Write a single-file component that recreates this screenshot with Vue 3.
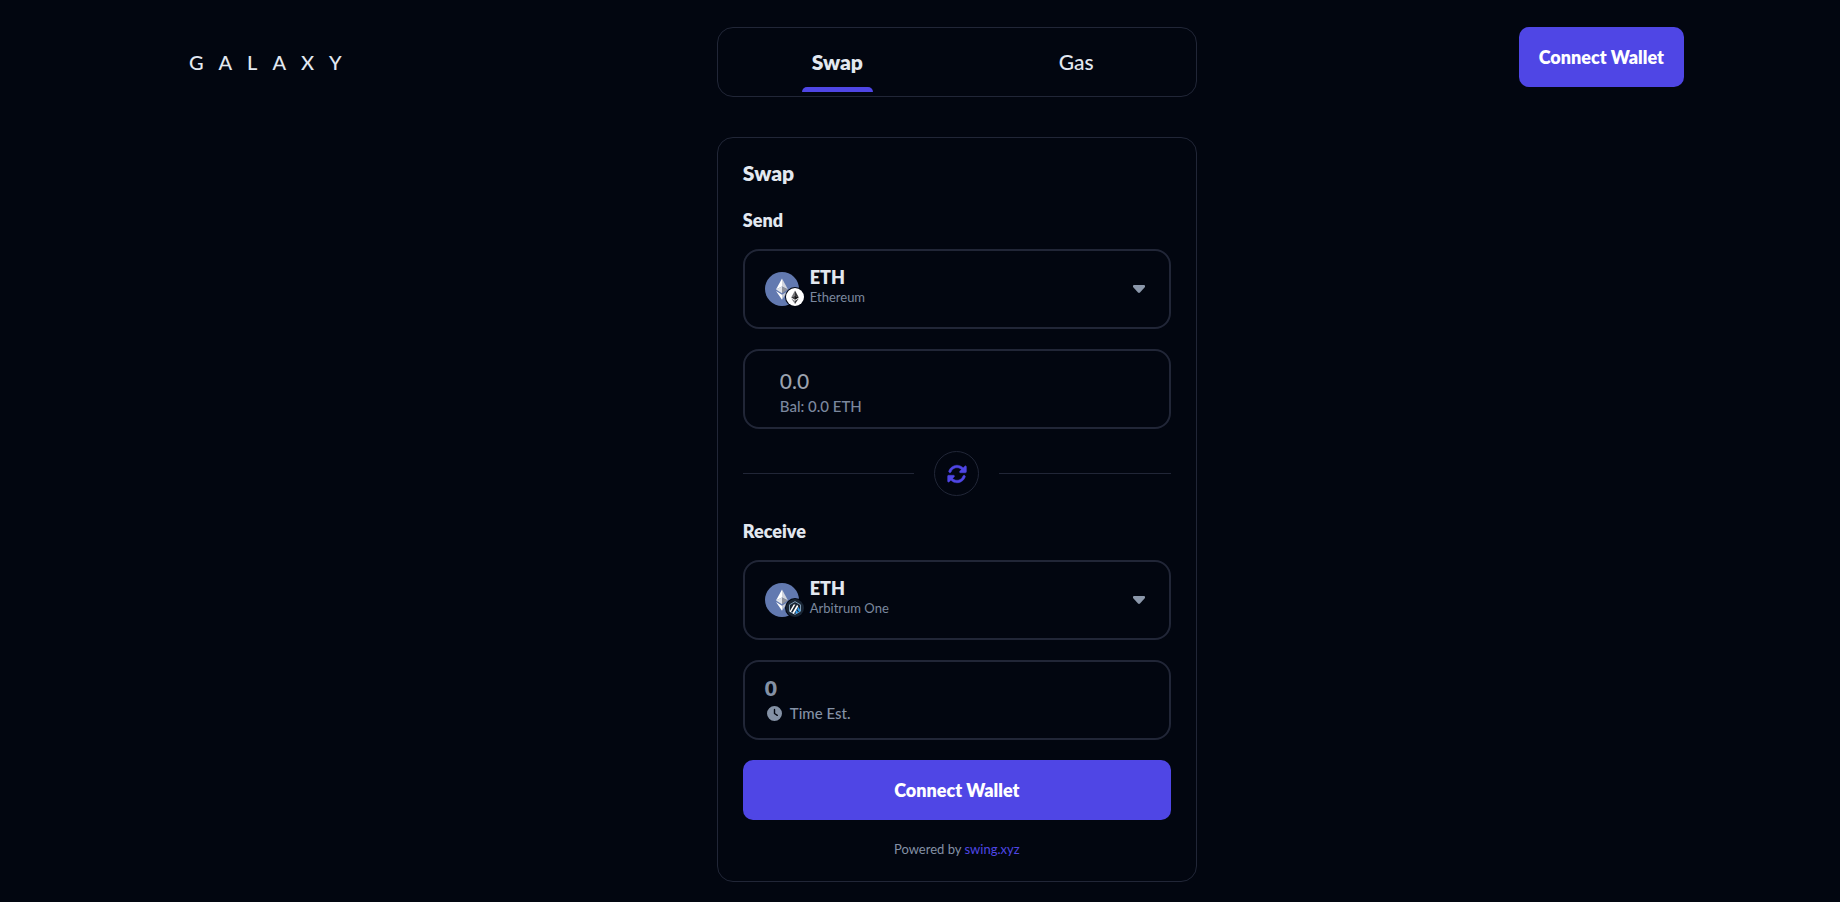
<template>
  <div class="page">
    <header class="header">
      <a class="logo" href="#">GALAXY</a>
      <nav class="tabs">
        <button
          v-for="tab in tabs"
          :key="tab"
          type="button"
          class="tab"
          :class="{ active: tab === activeTab }"
          @click="activeTab = tab"
        >{{ tab }}</button>
      </nav>
      <button type="button" class="btn connect">Connect Wallet</button>
    </header>

    <main class="main">
      <section class="card">
        <h1 class="title">{{ activeTab }}</h1>

        <label class="label" for="send">Send</label>
        <div class="box token">
          <span class="icon">
            <svg class="coin" viewBox="0 0 34 34" aria-hidden="true">
              <circle cx="17" cy="17" r="17" fill="#6279b0" />
              <path d="M17 6.500v8.100l-6 3z" fill="#fff" />
              <path d="M17 6.500v8.100l6 3z" fill="#d2d5de" />
              <path d="M11 17.600l6-3v6.600z" fill="#dfe2e9" />
              <path d="M23 17.600l-6-3v6.600z" fill="#8e919b" />
              <path d="M11 19l6 3.700v5z" fill="#fff" />
              <path d="M23 19l-6 3.700v5z" fill="#c3c8d6" />
            </svg>
            <svg class="chain" viewBox="0 0 20 20" aria-hidden="true">
              <circle cx="10" cy="10" r="10" fill="#020610" />
              <circle cx="10" cy="10" r="9" fill="#fff" />
              <path d="M10 3.500v5.200l-3.800 1.800z" fill="#77777a" />
              <path d="M10 3.500v5.200l3.800 1.800z" fill="#343437" />
              <path d="M6.200 10.500l3.800-1.800v4z" fill="#3c3c3f" />
              <path d="M13.800 10.500l-3.800-1.800v4z" fill="#141416" />
              <path d="M6.200 11.500l3.800 2.200v3.200z" fill="#88888b" />
              <path d="M13.800 11.500l-3.800 2.200v3.200z" fill="#3a3a3d" />
            </svg>
          </span>
          <div class="names">
            <select id="send" v-model="sendToken" class="select">
              <option>ETH</option>
              <option>USDC</option>
            </select>
            <span class="network">Ethereum</span>
          </div>
          <svg class="caret" viewBox="0 0 12 8" aria-hidden="true">
            <path d="M1 0h10q1 0 1 1v1L7 7.500q-1 .800-2 0L0 2V1q0-1 1-1z" fill="currentColor" />
          </svg>
        </div>

        <div class="box amount">
          <input v-model="amount" class="input" type="text" placeholder="0.0" aria-label="Amount" />
          <span class="balance">Bal: 0.0 {{ sendToken }}</span>
        </div>

        <div class="divider">
          <button type="button" class="switch" aria-label="Switch tokens" @click="switchTokens">
            <svg viewBox="0 0 512 512" width="20" height="20" aria-hidden="true">
              <path fill="currentColor" stroke="currentColor" stroke-width="12" d="M142.900 142.900c62.200-62.200 162.700-62.500 225.300-1L327 183c-6.900 6.900-8.900 17.200-5.200 26.200s12.500 14.800 22.200 14.800H472c13.300 0 24-10.700 24-24V72c0-9.700-5.800-18.500-14.800-22.200s-19.300-1.700-26.200 5.200L413.400 96.600c-87.600-86.500-228.700-86.200-315.800 1C73.200 122 55.600 150.700 44.800 181.400c-5.900 16.700 2.900 34.900 19.500 40.800s34.900-2.900 40.800-19.500c7.700-21.800 20.200-42.300 37.800-59.800zM16 312V440c0 9.700 5.800 18.500 14.800 22.200s19.300 1.700 26.200-5.200l41.600-41.600c87.600 86.500 228.700 86.200 315.800-1c24.400-24.400 42.100-53.100 52.900-83.700c5.900-16.700-2.900-34.900-19.500-40.800s-34.900 2.900-40.800 19.500c-7.700 21.800-20.200 42.300-37.800 59.800c-62.200 62.200-162.700 62.500-225.300 1L185 329c6.900-6.900 8.900-17.200 5.200-26.200s-12.500-14.800-22.200-14.800H40c-13.300 0-24 10.700-24 24z" />
            </svg>
          </button>
        </div>

        <label class="label" for="receive">Receive</label>
        <div class="box token">
          <span class="icon">
            <svg class="coin" viewBox="0 0 34 34" aria-hidden="true">
              <circle cx="17" cy="17" r="17" fill="#6279b0" />
              <path d="M17 6.500v8.100l-6 3z" fill="#fff" />
              <path d="M17 6.500v8.100l6 3z" fill="#d2d5de" />
              <path d="M11 17.600l6-3v6.600z" fill="#dfe2e9" />
              <path d="M23 17.600l-6-3v6.600z" fill="#8e919b" />
              <path d="M11 19l6 3.700v5z" fill="#fff" />
              <path d="M23 19l-6 3.700v5z" fill="#c3c8d6" />
            </svg>
            <svg class="chain" viewBox="0 0 20 20" aria-hidden="true">
              <circle cx="10" cy="10" r="10" fill="#020610" />
              <circle cx="10" cy="10" r="9" fill="#192534" />
              <path d="M10 3.600l5.500 3.200v6.400L10 16.400l-5.500-3.200V6.800z" fill="none" stroke="#7f9bb5" stroke-width="1" />
              <path d="M4.600 13.400L8.700 6.600h1.700l-4.600 7.600z" fill="#fff" />
              <path d="M7.300 15.100l4.900-8.300 1 1.700-4.400 7.500z" fill="#fff" />
              <path d="M12.200 11.200l1.300-2.300 2 3.800-1.300 1.200z" fill="#2d9cf0" />
              <path d="M10.300 14.100l1.200-2 1.700 2.500-1.900 1.200z" fill="#2d9cf0" />
            </svg>
          </span>
          <div class="names">
            <select id="receive" v-model="receiveToken" class="select">
              <option>ETH</option>
              <option>USDC</option>
            </select>
            <span class="network">Arbitrum One</span>
          </div>
          <svg class="caret" viewBox="0 0 12 8" aria-hidden="true">
            <path d="M1 0h10q1 0 1 1v1L7 7.500q-1 .800-2 0L0 2V1q0-1 1-1z" fill="currentColor" />
          </svg>
        </div>

        <div class="box result">
          <span class="value">0</span>
          <span class="time">
            <svg viewBox="0 0 512 512" width="15" height="15" aria-hidden="true">
              <path fill="currentColor" d="M256 0a256 256 0 1 1 0 512A256 256 0 1 1 256 0zM232 120V256c0 8 4 15.500 10.700 20l96 64c11 7.400 25.900 4.400 33.300-6.700s4.400-25.900-6.700-33.300L280 243.200V120c0-13.300-10.700-24-24-24s-24 10.700-24 24z" />
            </svg>
            Time Est.
          </span>
        </div>

        <button type="button" class="btn">Connect Wallet</button>
        <p class="powered">Powered by <a href="#">swing.xyz</a></p>
      </section>
    </main>
  </div>
</template>

<script setup>
import { ref } from 'vue'

const tabs = ['Swap', 'Gas']
const activeTab = ref('Swap')
const sendToken = ref('ETH')
const receiveToken = ref('ETH')
const amount = ref('')

function switchTokens() {
  const token = sendToken.value
  sendToken.value = receiveToken.value
  receiveToken.value = token
}
</script>

<style>
body {
  margin: 0;
  background-color: #020610;
}
</style>

<style scoped>
.page {
  box-sizing: border-box;
  min-height: 100vh;
  padding: 27px 156px 20px 189px;
  background-color: #020610;
  color: #e2e8f0;
  font-family: Lato, "Liberation Sans", sans-serif;
}

.page * {
  box-sizing: border-box;
}

button,
input,
select {
  font-family: inherit;
}

button {
  cursor: pointer;
}

.header,
.main {
  display: grid;
  grid-template-columns: 13fr 480px 12fr;
}

.header {
  align-items: start;
}

.main {
  margin-top: 40px;
}

.logo {
  align-self: center;
  color: #e2e8f0;
  font-size: 20px;
  font-weight: 500;
  letter-spacing: 15px;
  text-decoration: none;
}

.tabs {
  display: flex;
  height: 70px;
  border: 1px solid #212637;
  border-radius: 16px;
}

.tab {
  display: flex;
  flex: 1;
  flex-direction: column;
  align-items: center;
  padding: 20px 0 4px;
  border: none;
  background: none;
  color: #e2e8f0;
  font-size: 21px;
  font-weight: 500;
  line-height: 28px;
}

.tab.active {
  font-weight: 800;
}

.tab.active::after {
  content: "";
  width: 71px;
  height: 5px;
  margin-top: auto;
  border-radius: 5px 5px 0 0;
  background-color: #4f46e5;
}

.btn {
  height: 60px;
  padding: 0 20px;
  border: none;
  border-radius: 10px;
  background-color: #4f46e5;
  color: #fff;
  font-size: 18px;
  font-weight: 800;
}

.connect {
  justify-self: end;
}

.card {
  display: flex;
  flex-direction: column;
  grid-column: 2;
  padding: 21px 25px;
  border: 1px solid #212637;
  border-radius: 16px;
}

.title {
  margin: 0 0 20px;
  font-size: 21px;
  font-weight: 800;
  line-height: 28px;
}

.label {
  margin-bottom: 16px;
  font-size: 18px;
  font-weight: 800;
  line-height: 26px;
}

.box {
  display: flex;
  height: 80px;
  border: 2px solid #212637;
  border-radius: 16px;
}

.token {
  align-items: center;
  margin-bottom: 20px;
  padding: 0 24px 0 20px;
}

.icon {
  position: relative;
  width: 34px;
  height: 34px;
}

.coin {
  display: block;
}

.chain {
  position: absolute;
  right: -6px;
  bottom: -1px;
  width: 20px;
}

.names {
  display: flex;
  flex: 1;
  flex-direction: column;
  padding: 0 0 6px 11px;
}

.select {
  height: 22px;
  padding: 0;
  border: none;
  outline: none;
  appearance: none;
  background: none;
  color: #e2e8f0;
  font-size: 18px;
  font-weight: 800;
  line-height: 22px;
}

.select option {
  background-color: #020610;
}

.network {
  color: #7b889e;
  font-size: 13px;
  line-height: 18px;
}

.caret {
  width: 12px;
  color: #8b97aa;
}

.amount {
  flex-direction: column;
  padding: 16px 35px 0;
}

.input {
  width: 100%;
  height: 26px;
  padding: 0;
  border: none;
  outline: none;
  background: none;
  color: #e2e8f0;
  font-size: 21px;
  font-weight: 500;
}

.input::placeholder {
  color: #9ca3af;
}

.balance {
  color: #7b889e;
  font-size: 15px;
  font-weight: 500;
  line-height: 26px;
}

.divider {
  display: flex;
  align-items: center;
  gap: 20px;
  margin: 22px 0;
}

.divider::before,
.divider::after {
  content: "";
  flex: 1;
  height: 1px;
  background-color: #212637;
}

.switch {
  display: flex;
  align-items: center;
  justify-content: center;
  width: 45px;
  height: 45px;
  padding: 0;
  border: 1px solid #212637;
  border-radius: 50%;
  background: none;
  color: #4f46e5;
}

.result {
  flex-direction: column;
  justify-content: center;
  margin-bottom: 20px;
  padding: 0 20px;
  color: #8491a5;
}

.value {
  font-size: 21px;
  font-weight: 800;
  line-height: 26px;
}

.time {
  display: flex;
  align-items: center;
  gap: 8px;
  padding-left: 2px;
  font-size: 15px;
  font-weight: 500;
  line-height: 24px;
}

.powered {
  margin: 18px 0 0;
  color: #8491a5;
  font-size: 13px;
  line-height: 22px;
  text-align: center;
}

.powered a {
  color: #4f46e5;
  text-decoration: none;
}
</style>
